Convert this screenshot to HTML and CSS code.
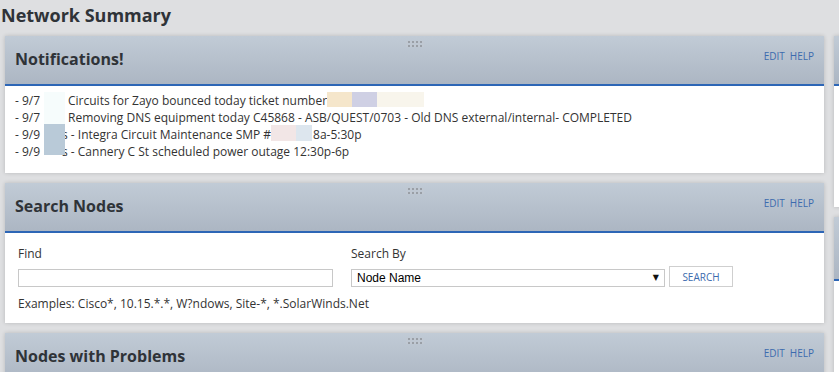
FILE: index.html
```html
<!DOCTYPE html>
<html lang="en">
<head>
  <meta charset="UTF-8" />
  <meta name="viewport" content="width=device-width, initial-scale=1.0"/>
  <title>Network Summary</title>
  <link rel="stylesheet" href="styles.css">
</head>
<body>
  <h1 class="page-title">Network Summary</h1>

  <div class="columns">
    <div class="column main">

      <div class="panel">
        <div class="panel-head">
          <span class="grip"></span>
          <h2>Notifications!</h2>
          <div class="head-links"><a href="#">Edit</a><a href="#">Help</a></div>
        </div>
        <div class="panel-body notes">
          <div class="note"><span class="date">- 9/7</span>Circuits for Zayo bounced today ticket number</div>
          <div class="note"><span class="date">- 9/7</span>Removing DNS equipment today C45868 - ASB/QUEST/0703 - Old DNS external/internal- COMPLETED</div>
          <div class="note"><span class="date short">- 9/9</span>s - Integra Circuit Maintenance SMP #<span class="gap"></span>8a-5:30p</div>
          <div class="note"><span class="date short">- 9/9</span>s - Cannery C St scheduled power outage 12:30p-6p</div>

          <!-- redacted bits -->
          <span class="redact r1"></span>
          <span class="redact r2"></span>
          <span class="redact r3"></span>
          <span class="redact r4"></span>
          <span class="redact r5"></span>
          <span class="redact r6"></span>
          <span class="redact r7"></span>
        </div>
      </div>

      <div class="panel">
        <div class="panel-head">
          <span class="grip"></span>
          <h2>Search Nodes</h2>
          <div class="head-links"><a href="#">Edit</a><a href="#">Help</a></div>
        </div>
        <div class="panel-body search">
          <div class="search-row">
            <div class="field find">
              <label>Find</label>
              <input type="text" />
            </div>
            <div class="field by">
              <label>Search By</label>
              <div class="select-wrap">
                <select>
                  <option>Node Name</option>
                </select>
              </div>
            </div>
            <button class="search-btn">Search</button>
          </div>
          <div class="examples">Examples: Cisco*, 10.15.*.*, W?ndows, Site-*, *.SolarWinds.Net</div>
        </div>
      </div>

      <div class="panel">
        <div class="panel-head">
          <span class="grip"></span>
          <h2>Nodes with Problems</h2>
          <div class="head-links"><a href="#">Edit</a><a href="#">Help</a></div>
        </div>
        <div class="panel-body tall"></div>
      </div>

    </div>

    <div class="column side">
      <div class="panel">
        <div class="panel-head"></div>
        <div class="panel-body side-one"></div>
      </div>
      <div class="panel">
        <div class="panel-head side-two"></div>
        <div class="panel-body tall"></div>
      </div>
    </div>
  </div>
</body>
</html>
```

FILE: styles.css
```css
* {
  box-sizing: border-box;
}

body {
  margin: 0;
  background: #dedfe1;
  font-family: "Open Sans", Arial, sans-serif;
  color: #333;
  overflow: hidden;
}

.page-title {
  margin: 0;
  padding: 3px 0 0 1px;
  height: 36px;
  font-size: 18px;
  font-weight: 700;
  color: #2f3338;
}

.columns {
  display: flex;
  gap: 10px;
  padding-left: 5px;
}

.column {
  display: flex;
  flex-direction: column;
  gap: 10px;
  flex-shrink: 0;
}

.column.main {
  width: 819px;
}

.column.side {
  width: 300px;
}

.panel {
  background: #fff;
  box-shadow: 0 0 4px rgba(0, 0, 0, 0.18);
}

.panel-head {
  position: relative;
  display: flex;
  align-items: center;
  justify-content: space-between;
  height: 50px;
  padding: 0 10px 2px;
  background: linear-gradient(#c1cbd6, #acb6c3);
  border-bottom: 2px solid #2d66b6;
}

.panel-head h2 {
  margin: 0;
  font-size: 16px;
  font-weight: 700;
  color: #2f3338;
}

.grip {
  position: absolute;
  top: 5px;
  left: 401px;
  width: 18px;
  height: 6px;
  background-image:
    linear-gradient(90deg, #c0c8d2 2px, transparent 2px),
    linear-gradient(#9a9fa6 2px, transparent 2px);
  background-size: 4px 4px;
  background-blend-mode: lighten;
}

.head-links {
  align-self: flex-start;
  margin-top: 13px;
  display: flex;
  gap: 5px;
}

.head-links a {
  font-size: 10px;
  text-transform: uppercase;
  color: #3c6bae;
  text-decoration: none;
}

.panel-body {
  position: relative;
}

.notes {
  padding: 6px 10px 13px;
  font-size: 12px;
  line-height: 17px;
}

.note .date {
  display: inline-block;
  width: 53px;
}

.note .date.short {
  width: 47px;
}

.note .gap {
  display: inline-block;
  width: 42px;
}

.redact {
  position: absolute;
}

.r1 { left: 39px; top: 6px;  width: 21px; height: 33px; background: #f6fcfc; }
.r2 { left: 39px; top: 38px; width: 21px; height: 31px; background: #b9cad8; }
.r3 { left: 322px; top: 6px; width: 25px; height: 15px; background: #f5e6cb; }
.r4 { left: 347px; top: 6px; width: 25px; height: 15px; background: #cfd0e4; }
.r5 { left: 372px; top: 6px; width: 47px; height: 15px; background: #f8f5ec; }
.r6 { left: 266px; top: 39px; width: 25px; height: 16px; background: #f2e6e6; }
.r7 { left: 291px; top: 39px; width: 16px; height: 16px; background: #dde6ee; }

.search {
  padding: 12px 13px 11px;
  font-size: 12px;
  line-height: 17px;
}

.search-row {
  display: flex;
  align-items: flex-end;
}

.field {
  display: flex;
  flex-direction: column;
  gap: 7px;
}

.field.find {
  width: 315px;
  margin-right: 18px;
}

.field.by {
  width: 314px;
  margin-right: 4px;
}

.field input {
  height: 18px;
  border: 1px solid #c8c8c8;
  padding: 0 4px;
}

.select-wrap {
  position: relative;
}

.select-wrap select {
  appearance: none;
  width: 100%;
  height: 18px;
  border: 1px solid #c8c8c8;
  border-radius: 0;
  background: #fff;
  padding: 0 5px;
  font-family: "Liberation Sans", Arial, sans-serif;
  font-size: 12px;
  color: #000;
}

.select-wrap::after {
  content: "\25BC";
  position: absolute;
  right: 6px;
  top: 2px;
  font-family: "DejaVu Sans", sans-serif;
  font-size: 8px;
  line-height: 14px;
  color: #111;
  pointer-events: none;
}

.search-btn {
  width: 64px;
  height: 21px;
  border: 1px solid #cfcfcf;
  background: #fff;
  font-family: "Open Sans", Arial, sans-serif;
  font-size: 10px;
  text-transform: uppercase;
  color: #3c6bae;
  padding: 0;
}

.examples {
  margin-top: 8px;
}

.tall {
  height: 200px;
}

.side-one {
  height: 121px;
}

.side-two {
  height: 64px;
}
```
